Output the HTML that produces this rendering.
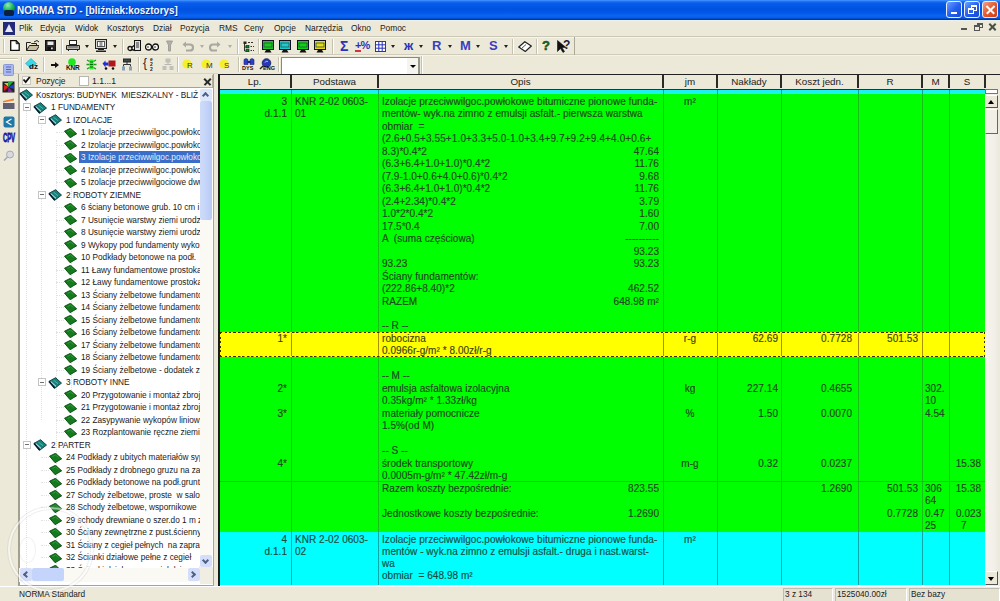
<!DOCTYPE html>
<html><head><meta charset="utf-8">
<style>
*{margin:0;padding:0;box-sizing:border-box}
html,body{width:1000px;height:601px;overflow:hidden;background:#ece9d8;font-family:"Liberation Sans",sans-serif;color:#000;position:relative}
.a{position:absolute}
#title{left:0;top:0;width:1000px;height:20px;background:linear-gradient(#48a0ff 0,#2a78f8 1px,#0a5cea 3px,#0052e0 9px,#0458e8 13px,#0a66f4 16px,#0658e0 18px,#0038a8 19.5px,#0030a0 20px)}
#title .t{left:17px;top:3.5px;font-weight:bold;font-size:11px;transform:scaleX(.9);transform-origin:0 0;color:#f4f8ff;white-space:nowrap;text-shadow:1px 1px 0 #0a2c8a}
.wb{top:1px;width:16px;height:17px;border:1px solid #e8eefc;border-radius:3px;background:linear-gradient(135deg,#6aa0ff,#2660f0 50%,#1848d0)}
#menu{left:0;top:20px;width:1000px;height:17px;background:linear-gradient(#eef2f4 0,#ece9d8 2px);border-bottom:1px solid #cdc9b9}
#menu span{position:absolute;top:2.5px;font-size:9.3px;transform:scaleX(.9);transform-origin:0 0;white-space:nowrap;color:#1a1a1a}
.sep{position:absolute;width:2px;height:16px;border-left:1px solid #c5c2b2;border-right:1px solid #fff}
.tl{position:absolute;font-size:9.6px;white-space:pre;color:#1a1a1a;line-height:12px;transform:scaleX(.86);transform-origin:0 0}
.mb{width:8px;height:8px;border:1px solid #c4c4c4;background:#fff}
.mb:after{content:"";position:absolute;left:1px;top:2.5px;width:4px;height:1px;background:#707070}
.bk{width:13px;height:12px;background:linear-gradient(150deg,#3aa0a8 0,#1a7a80 45%,#0e4850 100%);transform:skewX(-20deg);border-radius:1px}
.lf{width:12px;height:10px;background:#1a7a20;transform:skewX(-35deg);border:1px solid #0a4a10}
.gh{position:absolute;top:75px;height:14px;font-size:9.8px;color:#222;text-align:center;line-height:14px}
.gt{position:absolute;font-size:10px;color:#1c3e1c;-webkit-text-stroke:.15px #2a5a2a;white-space:pre;line-height:12px;letter-spacing:0.05px}
.gy{color:#3a3a08}
.gc{color:#104848}
.vl{position:absolute;width:1px}
#status span{position:absolute;top:589px;font-size:9.2px;color:#222;white-space:nowrap;transform:scaleX(.9);transform-origin:0 0}
</style></head><body>
<div id="title" class="a">
  <div class="a" style="left:3px;top:2px;width:12px;height:9px;border-radius:6px 6px 3px 3px;background:radial-gradient(circle at 40% 35%,#8ff0b0,#18b050 60%,#0c7a38)"></div>
  <div class="a" style="left:4px;top:10px;width:10px;height:6px;background:#0b2040;border-radius:2px"></div>
  <div class="a t">NORMA STD - [bliźniak:kosztorys]</div>
  <div class="a wb" style="left:946px"><div class="a" style="left:4px;top:10px;width:6px;height:2px;background:#fff"></div></div>
  <div class="a wb" style="left:964px"><div class="a" style="left:6px;top:3px;width:6px;height:6px;border:1px solid #fff;border-top-width:2px"></div><div class="a" style="left:3px;top:6px;width:6px;height:6px;border:1px solid #fff;border-top-width:2px;background:#2a64f0"></div></div>
  <div class="a wb" style="left:982px;background:linear-gradient(135deg,#f5a080,#e35a30 50%,#c8401c)"><div class="a" style="left:2px;top:7px;width:11px;height:1.5px;background:#fff;transform:rotate(45deg)"></div><div class="a" style="left:2px;top:7px;width:11px;height:1.5px;background:#fff;transform:rotate(-45deg)"></div></div>
</div>
<div id="menu" class="a">
<div class="a" style="left:3px;top:2px;width:12px;height:13px;background:#232a78"><div class="a" style="left:2px;top:2px;width:0;height:0;border-left:4px solid transparent;border-right:4px solid transparent;border-bottom:8px solid #e8e8f8"></div></div>
<span style="left:19px">Plik</span>
<span style="left:40px">Edycja</span>
<span style="left:75px">Widok</span>
<span style="left:107px">Kosztorys</span>
<span style="left:153px">Dział</span>
<span style="left:180px">Pozycja</span>
<span style="left:219px">RMS</span>
<span style="left:244px">Ceny</span>
<span style="left:274px">Opcje</span>
<span style="left:305px">Narzędzia</span>
<span style="left:351px">Okno</span>
<span style="left:380px">Pomoc</span>
<div class="a" style="left:961px;top:8px;width:6px;height:2px;background:#555"></div>
<div class="a" style="left:977px;top:3px;width:6px;height:5px;border:1px solid #555;border-top-width:2px"></div><div class="a" style="left:974px;top:5px;width:6px;height:6px;border:1px solid #555;border-top-width:2px;background:#ece9d8"></div>
<div class="a" style="left:988px;top:6px;width:9px;height:2px;background:#4a5048;transform:rotate(45deg)"></div><div class="a" style="left:988px;top:6px;width:9px;height:2px;background:#4a5048;transform:rotate(-45deg)"></div>
</div>
<div class="a" style="left:0;top:37px;width:1000px;height:1px;background:#f6f4ec"></div>
<div class="a" style="left:0;top:54px;width:1000px;height:1px;background:#d0ccbc"></div>
<div class="a" style="left:0;top:55px;width:1000px;height:1px;background:#f4f2ea"></div>
<div class="a" style="left:0;top:73px;width:218px;height:1px;background:#d8d4c4"></div>
<div class="a" style="left:3px;top:39px;width:2px;height:14px;border-left:1px solid #c8c4b4;border-right:1px solid #fff"></div>
<div class="a" style="left:21px;top:57px;width:2px;height:14px;border-left:1px solid #c8c4b4;border-right:1px solid #fff"></div>
<svg class="a" style="left:10px;top:40px" width="10" height="11" viewBox="0 0 10 11"><path d="M.7 .7h5.5l3 3v6.6h-8.5z" fill="#fff" stroke="#111" stroke-width="1.3"/><path d="M6.2 .7v3h3" fill="none" stroke="#111"/></svg>
<svg class="a" style="left:26px;top:40px" width="13" height="11" viewBox="0 0 13 11"><path d="M.5 2.5h4l1 1h5v2" fill="#e8e0c0" stroke="#222"/><path d="M.5 10.5v-8M.5 10.5h10l3-5h-10z" fill="#c8c0a0" stroke="#222"/><path d="M8 2l3-1.5 2 1.5" fill="none" stroke="#222"/></svg>
<svg class="a" style="left:45px;top:40px" width="11" height="11" viewBox="0 0 11 11"><rect x=".5" y=".5" width="10" height="10" fill="#2a2a2a" stroke="#111"/><rect x="2.5" y="1.5" width="6" height="3.5" fill="#e8e8e8"/><rect x="2.5" y="7" width="6" height="3.5" fill="#111"/><rect x="6" y="7.5" width="1.8" height="1.8" fill="#ddd"/></svg>
<div class="a" style="left:61px;top:39px;width:2px;height:15px;border-left:1px solid #c5c2b2;border-right:1px solid #fff"></div>
<svg class="a" style="left:66px;top:40px" width="14" height="11" viewBox="0 0 14 11"><rect x="3.5" y=".5" width="7" height="4" fill="#fff" stroke="#222"/><path d="M.5 5.5h13v4h-13z" fill="#b8b8b0" stroke="#222"/><rect x="2.5" y="9.5" width="9" height="2" fill="#eee" stroke="#222"/><line x1="2" y1="7" x2="12" y2="7" stroke="#555"/></svg>
<div class="a" style="left:85px;top:45px;width:0;height:0;border-left:2.5px solid transparent;border-right:2.5px solid transparent;border-top:3px solid #222"></div>
<svg class="a" style="left:95px;top:39px" width="12" height="13" viewBox="0 0 12 13"><rect x=".5" y=".5" width="11" height="9" fill="#d8d8d0" stroke="#222"/><rect x="2.5" y="2.5" width="7" height="5" fill="#fff" stroke="#555"/><rect x="4.5" y="3" width="3" height="4" fill="#999"/><rect x="3" y="10" width="6" height="1" fill="#222"/><rect x="1" y="11.5" width="10" height="1.5" fill="#222"/></svg>
<div class="a" style="left:113px;top:45px;width:0;height:0;border-left:2.5px solid transparent;border-right:2.5px solid transparent;border-top:3px solid #222"></div>
<div class="a" style="left:122px;top:39px;width:2px;height:15px;border-left:1px solid #c5c2b2;border-right:1px solid #fff"></div>
<svg class="a" style="left:127px;top:40px" width="14" height="12" viewBox="0 0 14 12"><circle cx="3" cy="8.5" r="2" fill="none" stroke="#111" stroke-width="1.3"/><path d="M4.5 7.5l4-3M4.5 9.5l4 1" stroke="#111" stroke-width="1.3"/><rect x="7.5" y=".5" width="6" height="10" fill="#e0e0e0" stroke="#111"/><line x1="9" y1="3" x2="12" y2="3" stroke="#333"/><line x1="9" y1="5" x2="12" y2="5" stroke="#333"/><line x1="9" y1="7" x2="12" y2="7" stroke="#333"/></svg>
<svg class="a" style="left:145px;top:42px" width="14" height="9" viewBox="0 0 14 9"><circle cx="3.5" cy="5" r="3" fill="#f8f8f0" stroke="#111" stroke-width="1.3"/><circle cx="10.5" cy="5" r="3" fill="#f8f8f0" stroke="#111" stroke-width="1.3"/><path d="M2 5h2M9 5h2" stroke="#333"/></svg>
<svg class="a" style="left:166px;top:40px" width="7" height="12" viewBox="0 0 7 12"><path d="M.5 1h6l-2 4v6h-2v-6z" fill="#b0b0a8" stroke="#a0a098"/></svg>
<svg class="a" style="left:182px;top:41px" width="12" height="11" viewBox="0 0 12 11"><path d="M3 3.5h5a3 3 0 0 1 0 6h-4" fill="none" stroke="#a8a8a0" stroke-width="2.2"/><path d="M.5 3.5l3.5-3v6z" fill="#a8a8a0"/></svg>
<div class="a" style="left:200px;top:45px;width:0;height:0;border-left:2.5px solid transparent;border-right:2.5px solid transparent;border-top:3px solid #b0aea0"></div>
<svg class="a" style="left:209px;top:41px" width="12" height="11" viewBox="0 0 12 11"><path d="M9 3.5h-5a3 3 0 0 0 0 6h4" fill="none" stroke="#a8a8a0" stroke-width="2.2"/><path d="M11.5 3.5l-3.5-3v6z" fill="#a8a8a0"/></svg>
<div class="a" style="left:228px;top:45px;width:0;height:0;border-left:2.5px solid transparent;border-right:2.5px solid transparent;border-top:3px solid #b0aea0"></div>
<div class="a" style="left:237px;top:39px;width:2px;height:15px;border-left:1px solid #c5c2b2;border-right:1px solid #fff"></div>
<svg class="a" style="left:243px;top:41px" width="12" height="11" viewBox="0 0 12 11"><rect x=".5" y=".5" width="3" height="2.5" fill="#222"/><rect x="3" y="4.5" width="3" height="2.5" fill="#0a8a2a" stroke="#111" stroke-width=".6"/><rect x="3" y="8.5" width="3" height="2.5" fill="#0a8a2a" stroke="#111" stroke-width=".6"/><path d="M1.5 3v7h1.5M1.5 6h1.5" stroke="#333" fill="none"/><path d="M5 1.5h2M8 1.5h2M7.5 5.5h1.5M7.5 9.5h1.5M10 5.5h1M10 9.5h1" stroke="#333"/></svg>
<div class="a" style="left:258px;top:39px;width:2px;height:15px;border-left:1px solid #c5c2b2;border-right:1px solid #fff"></div>
<svg class="a" style="left:262px;top:40px" width="12" height="13" viewBox="0 0 12 13"><rect x=".5" y=".5" width="11" height="9" fill="#1ec81e" stroke="#112"/><rect x="2" y="3" width="8" height="4" fill="none" stroke="#254" stroke-width=".8"/><path d="M4 10h4l1.5 2.5h-7z" fill="#111"/></svg>
<svg class="a" style="left:279px;top:40px" width="12" height="13" viewBox="0 0 12 13"><rect x=".5" y=".5" width="11" height="9" fill="#22c8d0" stroke="#112"/><rect x="2" y="3" width="8" height="4" fill="none" stroke="#254" stroke-width=".8"/><path d="M4 10h4l1.5 2.5h-7z" fill="#111"/></svg>
<svg class="a" style="left:297px;top:40px" width="12" height="13" viewBox="0 0 12 13"><rect x=".5" y=".5" width="11" height="9" fill="#12d012" stroke="#112"/><rect x="2" y="3" width="8" height="4" fill="none" stroke="#254" stroke-width=".8"/><path d="M4 10h4l1.5 2.5h-7z" fill="#111"/></svg>
<svg class="a" style="left:314px;top:40px" width="12" height="13" viewBox="0 0 12 13"><rect x=".5" y=".5" width="11" height="9" fill="#e8d820" stroke="#112"/><rect x="2" y="3" width="8" height="4" fill="none" stroke="#254" stroke-width=".8"/><path d="M4 10h4l1.5 2.5h-7z" fill="#111"/></svg>
<div class="a" style="left:332px;top:39px;width:2px;height:15px;border-left:1px solid #c5c2b2;border-right:1px solid #fff"></div>
<div class="a" style="left:340px;top:38px;font-size:14px;font-weight:bold;color:#2a34b8;line-height:16px">Σ</div>
<div class="a" style="left:355px;top:39px;font-size:11px;font-weight:bold;color:#2a34b8;line-height:12px;letter-spacing:-1px">+%</div>
<div class="a" style="left:355px;top:50px;width:6px;height:2px;background:#d83040"></div>
<svg class="a" style="left:375px;top:41px" width="11" height="11" viewBox="0 0 11 11"><rect x=".5" y=".5" width="10" height="10" fill="#fff" stroke="#2a34b8"/><path d="M.5 3.8h10M.5 7.2h10M3.8 .5v10M7.2 .5v10" stroke="#2a34b8"/></svg>
<div class="a" style="left:391px;top:45px;width:0;height:0;border-left:2.5px solid transparent;border-right:2.5px solid transparent;border-top:3px solid #222"></div>
<div class="a" style="left:404px;top:39px;font-size:13px;font-weight:bold;color:#2a34b8;line-height:14px">ж</div>
<div class="a" style="left:419px;top:45px;width:0;height:0;border-left:2.5px solid transparent;border-right:2.5px solid transparent;border-top:3px solid #222"></div>
<div class="a" style="left:432px;top:39px;font-size:13px;font-weight:bold;color:#3840c0;line-height:14px">R</div>
<div class="a" style="left:448px;top:45px;width:0;height:0;border-left:2.5px solid transparent;border-right:2.5px solid transparent;border-top:3px solid #222"></div>
<div class="a" style="left:460px;top:39px;font-size:13px;font-weight:bold;color:#3840c0;line-height:14px">M</div>
<div class="a" style="left:476px;top:45px;width:0;height:0;border-left:2.5px solid transparent;border-right:2.5px solid transparent;border-top:3px solid #222"></div>
<div class="a" style="left:489px;top:39px;font-size:13px;font-weight:bold;color:#3840c0;line-height:14px">S</div>
<div class="a" style="left:504px;top:45px;width:0;height:0;border-left:2.5px solid transparent;border-right:2.5px solid transparent;border-top:3px solid #222"></div>
<div class="a" style="left:512px;top:39px;width:2px;height:15px;border-left:1px solid #c5c2b2;border-right:1px solid #fff"></div>
<svg class="a" style="left:518px;top:41px" width="14" height="11" viewBox="0 0 14 11"><path d="M.8 6l6-5.3 6.5 4.3-6 5.5z" fill="#fff" stroke="#222" stroke-width="1.2"/><path d="M3 8l5-4.5" stroke="#555"/></svg>
<div class="a" style="left:536px;top:39px;width:2px;height:15px;border-left:1px solid #c5c2b2;border-right:1px solid #fff"></div>
<div class="a" style="left:542px;top:38px;font-size:13px;font-weight:bold;color:#1a6a2a;line-height:15px;-webkit-text-stroke:.5px #0a4a1a">?</div>
<svg class="a" style="left:557px;top:40px" width="16" height="13" viewBox="0 0 16 13"><path d="M.5 .5v11l3-3 2.5 4 1.5-1-2.5-4h4z" fill="#111" stroke="#111" stroke-width=".6"/></svg>
<div class="a" style="left:563px;top:38px;font-size:12px;font-weight:bold;color:#1a1a40;line-height:14px">?</div>
<div class="a" style="left:574px;top:37px;width:1px;height:18px;background:#aca898"></div>
<div class="a" style="left:43px;top:57px;width:2px;height:15px;border-left:1px solid #c5c2b2;border-right:1px solid #fff"></div>
<svg class="a" style="left:25px;top:58px" width="13" height="13" viewBox="0 0 13 13"><path d="M6 .5l5.5 5-5.5 5-5.5-5z" fill="#38d8e8" stroke="#1aa8c8" stroke-width=".6"/></svg>
<div class="a" style="left:29px;top:62px;font-size:8px;font-weight:bold;color:#111;line-height:9px">dz</div>
<svg class="a" style="left:51px;top:62px" width="8" height="6" viewBox="0 0 8 6"><path d="M0 2h4v-2l4 3-4 3v-2h-4z" fill="#111"/></svg>
<svg class="a" style="left:66px;top:58px" width="13" height="13" viewBox="0 0 13 13"><circle cx="6" cy="4" r="3.8" fill="#20e820"/></svg>
<div class="a" style="left:66px;top:64px;font-size:6.5px;font-weight:bold;color:#0a1a0a;line-height:7px;letter-spacing:-.2px">KNR</div>
<svg class="a" style="left:86px;top:58px" width="11" height="13" viewBox="0 0 11 13"><path d="M3.5 1.5h4v10h-4z" fill="#38e838"/><path d="M1 2l2.5 1.5M10 2l-2.5 1.5M.5 6.5h3M10.5 6.5h-3M1 11l2.5-1.5M10 11l-2.5-1.5" stroke="#10a010" stroke-width="1.3"/><path d="M4 4h3M4 6.5h3M4 9h3" stroke="#0a6a0a"/></svg>
<svg class="a" style="left:102px;top:59px" width="14" height="11" viewBox="0 0 14 11"><rect x="6.5" y="1.5" width="7" height="6" fill="#b01818"/><path d="M.5 4.5l3-3v2h3v3h-3v2z" fill="#2030d0"/><circle cx="4" cy="9.5" r="1.3" fill="#111"/><circle cx="11" cy="9.5" r="1.3" fill="#111"/></svg>
<svg class="a" style="left:121px;top:58px" width="12" height="13" viewBox="0 0 12 13"><rect x="2.5" y="1" width="7" height="3" fill="#3a4a48" stroke="#222"/><path d="M6 4v2.5M2.5 6.5h7M2.5 6.5v2M9.5 6.5v2" stroke="#333"/><rect x="1" y="8.5" width="3" height="4" fill="#8aa0b8"/><rect x="8" y="8.5" width="3" height="4" fill="#8aa0b8"/></svg>
<div class="a" style="left:138px;top:57px;width:2px;height:15px;border-left:1px solid #c5c2b2;border-right:1px solid #fff"></div>
<div class="a" style="left:143px;top:57px;font-size:12px;color:#222;line-height:13px">{</div>
<div class="a" style="left:150px;top:57px;font-size:5px;font-weight:bold;color:#222;line-height:5px">e<br>2<br>2</div>
<svg class="a" style="left:162px;top:58px" width="12" height="13" viewBox="0 0 12 13"><rect x="3.5" y=".5" width="5" height="4" fill="#c0c0b8"/><path d="M6 4v2.5M2.5 6.5h7" stroke="#b8b8b0"/><rect x=".5" y="8" width="4" height="4" fill="#c0c0b8"/><rect x="7.5" y="8" width="4" height="4" fill="#c0c0b8"/></svg>
<div class="a" style="left:177px;top:57px;width:2px;height:15px;border-left:1px solid #c5c2b2;border-right:1px solid #fff"></div>
<svg class="a" style="left:182px;top:59px" width="10" height="10" viewBox="0 0 10 10"><circle cx="5" cy="5" r="4.6" fill="#f4f02a"/></svg>
<div class="a" style="left:187px;top:61px;font-size:8px;color:#333;line-height:9px">R</div>
<svg class="a" style="left:201px;top:59px" width="10" height="10" viewBox="0 0 10 10"><circle cx="5" cy="5" r="4.6" fill="#f4f02a"/></svg>
<div class="a" style="left:206px;top:61px;font-size:8px;color:#333;line-height:9px">M</div>
<svg class="a" style="left:219px;top:59px" width="10" height="10" viewBox="0 0 10 10"><circle cx="5" cy="5" r="4.6" fill="#f4f02a"/></svg>
<div class="a" style="left:224px;top:61px;font-size:8px;color:#333;line-height:9px">S</div>
<div class="a" style="left:238px;top:57px;width:2px;height:15px;border-left:1px solid #c5c2b2;border-right:1px solid #fff"></div>
<svg class="a" style="left:243px;top:58px" width="12" height="12" viewBox="0 0 12 12"><path d="M1 1.5l2 -1 2 1v5h-4zM7 1.5l2-1 2 1v5h-4z" fill="#2a40c8" stroke="#1a2080" stroke-width=".6"/><rect x="4.5" y="3" width="3" height="2" fill="#1a2080"/></svg>
<div class="a" style="left:242px;top:65px;font-size:5.5px;font-weight:bold;color:#111;line-height:6px">DYS</div>
<svg class="a" style="left:259px;top:58px" width="13" height="13" viewBox="0 0 13 13"><circle cx="7.5" cy="5" r="4.3" fill="#2838b8" stroke="#101858" stroke-width=".8"/><path d="M6 4.5a2 1.5 0 0 1 3 -1" stroke="#a8c0ff" fill="none"/><path d="M4 8l-3 3" stroke="#222" stroke-width="1.5"/></svg>
<div class="a" style="left:263px;top:65px;font-size:5.5px;font-weight:bold;color:#111;line-height:6px">ENG</div>
<div class="a" style="left:278px;top:57px;width:2px;height:15px;border-left:1px solid #c5c2b2;border-right:1px solid #fff"></div>
<svg class="a" style="left:3px;top:64px" width="11" height="12" viewBox="0 0 11 12"><rect x=".5" y=".5" width="10" height="11" rx="1" fill="#aab8f0" stroke="#8898d8"/><path d="M3 3h5M3 5.5h5M3 8h5" stroke="#5a6ab8"/></svg>
<svg class="a" style="left:2px;top:81px" width="13" height="12" viewBox="0 0 13 12"><rect x=".5" y=".5" width="12" height="11" fill="#222"/><path d="M6.5 6L2 2h4z" fill="#e8c020"/><path d="M6.5 6L6 1h5z" fill="#20b040"/><path d="M6.5 6L12 3v5z" fill="#2040d0"/><path d="M6.5 6L11 11H6z" fill="#8020a0"/><path d="M6.5 6L2 10V4z" fill="#e02020"/></svg>
<svg class="a" style="left:2px;top:98px" width="13" height="12" viewBox="0 0 13 12"><path d="M1 3l11-2.5v2l-11 2z" fill="#f08030"/><rect x="1" y="5" width="11.5" height="6" fill="#606070"/></svg>
<svg class="a" style="left:3px;top:116px" width="12" height="12" viewBox="0 0 12 12"><rect x=".5" y=".5" width="11" height="11" rx="2" fill="#1e78a8"/><path d="M8.5 3l-5 3 5 3" stroke="#fff" fill="none" stroke-width="1.2"/></svg>
<div class="a" style="left:3px;top:131px;font-size:11px;font-weight:bold;color:#1a1aa8;line-height:12px;letter-spacing:-.3px;transform:scale(.55,1.1);transform-origin:0 0;-webkit-text-stroke:.7px #1a1aa8">CPV</div>
<svg class="a" style="left:3px;top:150px" width="12" height="11" viewBox="0 0 12 11"><circle cx="7" cy="4.5" r="3.5" fill="#d8d8e0" stroke="#a8a8b8"/><path d="M4.5 7l-3.5 3.5" stroke="#a8a8b8" stroke-width="1.6"/></svg>
<div class="a" style="left:281px;top:57px;width:139px;height:17px;background:#fff;border:1px solid #8a887c;border-right:2px solid #9a9888;border-bottom:none"></div>
<div class="a" style="left:407px;top:58px;width:11px;height:16px;background:#f6f4ee"></div>
<div class="a" style="left:410px;top:65px;width:0;height:0;border-left:3px solid transparent;border-right:3px solid transparent;border-top:3px solid #000"></div>
<div class="a" style="left:421px;top:56px;width:2px;height:18px;border-left:1px solid #c5c2b2;border-right:1px solid #fff"></div>
<div class="a" style="left:0px;top:58px;width:18px;height:1px;background:#c8c4b4"></div><div class="a" style="left:0px;top:59px;width:18px;height:1px;background:#fff"></div>
<div class="a" style="left:18px;top:74px;width:196px;height:512px;background:#fff;border:1px solid #a8a494;border-left:2px solid #a4a090"></div>
<div class="a" style="left:19px;top:74px;width:194px;height:14px;background:#ece9d8;border-bottom:1px solid #a6a393"></div>
<div class="a" style="left:22px;top:76px;width:9px;height:9px;border:1px solid #c8c8c0;background:#f8f8f4"></div>
<svg class="a" style="left:22px;top:76px" width="9" height="8" viewBox="0 0 9 8"><path d="M1.5 3.5l2.2 2.5 4-5" fill="none" stroke="#111" stroke-width="1.8"/></svg>
<div class="a" style="left:36px;top:75px;font-size:9.6px;color:#222;white-space:nowrap;transform:scaleX(.88);transform-origin:0 0">Pozycje</div>
<div class="a" style="left:79px;top:76px;width:10px;height:10px;border:1px solid #b8b8b0;background:#fff"></div>
<div class="a" style="left:92px;top:75px;font-size:9.6px;color:#222;white-space:nowrap;transform:scaleX(.9);transform-origin:0 0">1.1...1</div>
<div class="a" style="left:200px;top:75px;width:13px;height:13px;border-right:1px solid #b4b0a0;border-bottom:1px solid #b4b0a0"></div>
<div class="a" style="left:203px;top:81px;width:9px;height:1.6px;background:#2a2a2a;transform:rotate(45deg)"></div><div class="a" style="left:203px;top:81px;width:9px;height:1.6px;background:#2a2a2a;transform:rotate(-45deg)"></div>
<div class="a" style="left:19px;top:89px;width:181px;height:479px;overflow:hidden">
<div class="a" style="left:7px;top:11px;width:1px;height:470px;border-left:1px dotted #e2e2e2"></div>
<div class="a" style="left:22px;top:36px;width:1px;height:295px;border-left:1px dotted #e2e2e2"></div>
<div class="a" style="left:37px;top:51px;width:1px;height:430px;border-left:1px dotted #e2e2e2"></div>
<div class="a" style="left:52px;top:41px;width:1px;height:270px;border-left:1px dotted #e2e2e2"></div>
<svg class="a" style="left:0px;top:0.0px" width="14" height="12" viewBox="0 0 14 12"><path d="M1 4.3L7.6 .7l5.9 5.4-7 5.3z" fill="#17807a" stroke="#0a3a40" stroke-width=".9"/><path d="M5.5 3.2l4.5 3.5" stroke="#48b8a8" stroke-width="1"/><path d="M2.8 4.6l5.2 4.8" stroke="#e0f4f4" stroke-width="1"/><path d="M1 4.6l5.6 6.4" stroke="#0a1830" stroke-width="1.5"/></svg>
<div class="tl" style="left:17px;top:-0.5px;color:#1a1a1a">Kosztorys: BUDYNEK  MIESZKALNY - BLIŹ</div>
<div class="a mb" style="left:4px;top:14.0px"></div>
<svg class="a" style="left:14px;top:12.5px" width="14" height="12" viewBox="0 0 14 12"><path d="M1 4.3L7.6 .7l5.9 5.4-7 5.3z" fill="#17807a" stroke="#0a3a40" stroke-width=".9"/><path d="M5.5 3.2l4.5 3.5" stroke="#48b8a8" stroke-width="1"/><path d="M2.8 4.6l5.2 4.8" stroke="#e0f4f4" stroke-width="1"/><path d="M1 4.6l5.6 6.4" stroke="#0a1830" stroke-width="1.5"/></svg>
<div class="tl" style="left:32px;top:12.0px;color:#1a1a1a">1 FUNDAMENTY</div>
<div class="a mb" style="left:19px;top:26.5px"></div>
<svg class="a" style="left:29px;top:25.0px" width="14" height="12" viewBox="0 0 14 12"><path d="M1 4.3L7.6 .7l5.9 5.4-7 5.3z" fill="#17807a" stroke="#0a3a40" stroke-width=".9"/><path d="M5.5 3.2l4.5 3.5" stroke="#48b8a8" stroke-width="1"/><path d="M2.8 4.6l5.2 4.8" stroke="#e0f4f4" stroke-width="1"/><path d="M1 4.6l5.6 6.4" stroke="#0a1830" stroke-width="1.5"/></svg>
<div class="tl" style="left:47px;top:24.5px;color:#1a1a1a">1 IZOLACJE</div>
<div class="a" style="left:37px;top:43px;width:8px;height:1px;border-top:1px dotted #e2e2e2"></div>
<svg class="a" style="left:45px;top:38.5px" width="13" height="10" viewBox="0 0 13 10"><path d="M.5 3.2L6.5 .3l6.2 5.5-6.6 3.9z" fill="#157a1e" stroke="#0a4a10" stroke-width=".9"/><path d="M3.5 3.5l3-1.5 3 2.5" fill="none" stroke="#2aa83a" stroke-width=".8"/></svg>
<div class="tl" style="left:62px;top:37.0px;color:#1a1a1a">1 Izolacje przeciwwilgoc.powłokowe</div>
<div class="a" style="left:37px;top:56px;width:8px;height:1px;border-top:1px dotted #e2e2e2"></div>
<svg class="a" style="left:45px;top:51.0px" width="13" height="10" viewBox="0 0 13 10"><path d="M.5 3.2L6.5 .3l6.2 5.5-6.6 3.9z" fill="#157a1e" stroke="#0a4a10" stroke-width=".9"/><path d="M3.5 3.5l3-1.5 3 2.5" fill="none" stroke="#2aa83a" stroke-width=".8"/></svg>
<div class="tl" style="left:62px;top:49.5px;color:#1a1a1a">2 Izolacje przeciwwilgoc.powłokowe</div>
<div class="a" style="left:37px;top:68px;width:8px;height:1px;border-top:1px dotted #e2e2e2"></div>
<svg class="a" style="left:45px;top:63.5px" width="13" height="10" viewBox="0 0 13 10"><path d="M.5 3.2L6.5 .3l6.2 5.5-6.6 3.9z" fill="#157a1e" stroke="#0a4a10" stroke-width=".9"/><path d="M3.5 3.5l3-1.5 3 2.5" fill="none" stroke="#2aa83a" stroke-width=".8"/></svg>
<div class="a" style="left:60px;top:62.0px;width:126px;height:12px;background:#3a6ec8"></div>
<div class="tl" style="left:62px;top:62.0px;color:#e8eef8">3 Izolacje przeciwwilgoc.powłokowe</div>
<div class="a" style="left:37px;top:81px;width:8px;height:1px;border-top:1px dotted #e2e2e2"></div>
<svg class="a" style="left:45px;top:76.0px" width="13" height="10" viewBox="0 0 13 10"><path d="M.5 3.2L6.5 .3l6.2 5.5-6.6 3.9z" fill="#157a1e" stroke="#0a4a10" stroke-width=".9"/><path d="M3.5 3.5l3-1.5 3 2.5" fill="none" stroke="#2aa83a" stroke-width=".8"/></svg>
<div class="tl" style="left:62px;top:74.5px;color:#1a1a1a">4 Izolacje przeciwwilgoc.powłokowe</div>
<div class="a" style="left:37px;top:93px;width:8px;height:1px;border-top:1px dotted #e2e2e2"></div>
<svg class="a" style="left:45px;top:88.5px" width="13" height="10" viewBox="0 0 13 10"><path d="M.5 3.2L6.5 .3l6.2 5.5-6.6 3.9z" fill="#157a1e" stroke="#0a4a10" stroke-width=".9"/><path d="M3.5 3.5l3-1.5 3 2.5" fill="none" stroke="#2aa83a" stroke-width=".8"/></svg>
<div class="tl" style="left:62px;top:87.0px;color:#1a1a1a">5 Izolacje przeciwwilgociowe dwukrotne</div>
<div class="a mb" style="left:19px;top:101.5px"></div>
<svg class="a" style="left:29px;top:100.0px" width="14" height="12" viewBox="0 0 14 12"><path d="M1 4.3L7.6 .7l5.9 5.4-7 5.3z" fill="#17807a" stroke="#0a3a40" stroke-width=".9"/><path d="M5.5 3.2l4.5 3.5" stroke="#48b8a8" stroke-width="1"/><path d="M2.8 4.6l5.2 4.8" stroke="#e0f4f4" stroke-width="1"/><path d="M1 4.6l5.6 6.4" stroke="#0a1830" stroke-width="1.5"/></svg>
<div class="tl" style="left:47px;top:99.5px;color:#1a1a1a">2 ROBOTY ZIEMNE</div>
<div class="a" style="left:37px;top:118px;width:8px;height:1px;border-top:1px dotted #e2e2e2"></div>
<svg class="a" style="left:45px;top:113.5px" width="13" height="10" viewBox="0 0 13 10"><path d="M.5 3.2L6.5 .3l6.2 5.5-6.6 3.9z" fill="#157a1e" stroke="#0a4a10" stroke-width=".9"/><path d="M3.5 3.5l3-1.5 3 2.5" fill="none" stroke="#2aa83a" stroke-width=".8"/></svg>
<div class="tl" style="left:62px;top:112.0px;color:#1a1a1a">6 ściany betonowe grub. 10 cm i</div>
<div class="a" style="left:37px;top:131px;width:8px;height:1px;border-top:1px dotted #e2e2e2"></div>
<svg class="a" style="left:45px;top:126.0px" width="13" height="10" viewBox="0 0 13 10"><path d="M.5 3.2L6.5 .3l6.2 5.5-6.6 3.9z" fill="#157a1e" stroke="#0a4a10" stroke-width=".9"/><path d="M3.5 3.5l3-1.5 3 2.5" fill="none" stroke="#2aa83a" stroke-width=".8"/></svg>
<div class="tl" style="left:62px;top:124.5px;color:#1a1a1a">7 Usunięcie warstwy ziemi urodzajnej</div>
<div class="a" style="left:37px;top:143px;width:8px;height:1px;border-top:1px dotted #e2e2e2"></div>
<svg class="a" style="left:45px;top:138.5px" width="13" height="10" viewBox="0 0 13 10"><path d="M.5 3.2L6.5 .3l6.2 5.5-6.6 3.9z" fill="#157a1e" stroke="#0a4a10" stroke-width=".9"/><path d="M3.5 3.5l3-1.5 3 2.5" fill="none" stroke="#2aa83a" stroke-width=".8"/></svg>
<div class="tl" style="left:62px;top:137.0px;color:#1a1a1a">8 Usunięcie warstwy ziemi urodzajnej</div>
<div class="a" style="left:37px;top:156px;width:8px;height:1px;border-top:1px dotted #e2e2e2"></div>
<svg class="a" style="left:45px;top:151.0px" width="13" height="10" viewBox="0 0 13 10"><path d="M.5 3.2L6.5 .3l6.2 5.5-6.6 3.9z" fill="#157a1e" stroke="#0a4a10" stroke-width=".9"/><path d="M3.5 3.5l3-1.5 3 2.5" fill="none" stroke="#2aa83a" stroke-width=".8"/></svg>
<div class="tl" style="left:62px;top:149.5px;color:#1a1a1a">9 Wykopy pod fundamenty wykonywane</div>
<div class="a" style="left:37px;top:168px;width:8px;height:1px;border-top:1px dotted #e2e2e2"></div>
<svg class="a" style="left:45px;top:163.5px" width="13" height="10" viewBox="0 0 13 10"><path d="M.5 3.2L6.5 .3l6.2 5.5-6.6 3.9z" fill="#157a1e" stroke="#0a4a10" stroke-width=".9"/><path d="M3.5 3.5l3-1.5 3 2.5" fill="none" stroke="#2aa83a" stroke-width=".8"/></svg>
<div class="tl" style="left:62px;top:162.0px;color:#1a1a1a">10 Podkłady betonowe na podł.</div>
<div class="a" style="left:37px;top:181px;width:8px;height:1px;border-top:1px dotted #e2e2e2"></div>
<svg class="a" style="left:45px;top:176.0px" width="13" height="10" viewBox="0 0 13 10"><path d="M.5 3.2L6.5 .3l6.2 5.5-6.6 3.9z" fill="#157a1e" stroke="#0a4a10" stroke-width=".9"/><path d="M3.5 3.5l3-1.5 3 2.5" fill="none" stroke="#2aa83a" stroke-width=".8"/></svg>
<div class="tl" style="left:62px;top:174.5px;color:#1a1a1a">11 Ławy fundamentowe prostokątne</div>
<div class="a" style="left:37px;top:193px;width:8px;height:1px;border-top:1px dotted #e2e2e2"></div>
<svg class="a" style="left:45px;top:188.5px" width="13" height="10" viewBox="0 0 13 10"><path d="M.5 3.2L6.5 .3l6.2 5.5-6.6 3.9z" fill="#157a1e" stroke="#0a4a10" stroke-width=".9"/><path d="M3.5 3.5l3-1.5 3 2.5" fill="none" stroke="#2aa83a" stroke-width=".8"/></svg>
<div class="tl" style="left:62px;top:187.0px;color:#1a1a1a">12 Ławy fundamentowe prostokątne</div>
<div class="a" style="left:37px;top:206px;width:8px;height:1px;border-top:1px dotted #e2e2e2"></div>
<svg class="a" style="left:45px;top:201.0px" width="13" height="10" viewBox="0 0 13 10"><path d="M.5 3.2L6.5 .3l6.2 5.5-6.6 3.9z" fill="#157a1e" stroke="#0a4a10" stroke-width=".9"/><path d="M3.5 3.5l3-1.5 3 2.5" fill="none" stroke="#2aa83a" stroke-width=".8"/></svg>
<div class="tl" style="left:62px;top:199.5px;color:#1a1a1a">13 Ściany żelbetowe fundamentowe</div>
<div class="a" style="left:37px;top:218px;width:8px;height:1px;border-top:1px dotted #e2e2e2"></div>
<svg class="a" style="left:45px;top:213.5px" width="13" height="10" viewBox="0 0 13 10"><path d="M.5 3.2L6.5 .3l6.2 5.5-6.6 3.9z" fill="#157a1e" stroke="#0a4a10" stroke-width=".9"/><path d="M3.5 3.5l3-1.5 3 2.5" fill="none" stroke="#2aa83a" stroke-width=".8"/></svg>
<div class="tl" style="left:62px;top:212.0px;color:#1a1a1a">14 Ściany żelbetowe fundamentowe</div>
<div class="a" style="left:37px;top:231px;width:8px;height:1px;border-top:1px dotted #e2e2e2"></div>
<svg class="a" style="left:45px;top:226.0px" width="13" height="10" viewBox="0 0 13 10"><path d="M.5 3.2L6.5 .3l6.2 5.5-6.6 3.9z" fill="#157a1e" stroke="#0a4a10" stroke-width=".9"/><path d="M3.5 3.5l3-1.5 3 2.5" fill="none" stroke="#2aa83a" stroke-width=".8"/></svg>
<div class="tl" style="left:62px;top:224.5px;color:#1a1a1a">15 Ściany żelbetowe fundamentowe</div>
<div class="a" style="left:37px;top:243px;width:8px;height:1px;border-top:1px dotted #e2e2e2"></div>
<svg class="a" style="left:45px;top:238.5px" width="13" height="10" viewBox="0 0 13 10"><path d="M.5 3.2L6.5 .3l6.2 5.5-6.6 3.9z" fill="#157a1e" stroke="#0a4a10" stroke-width=".9"/><path d="M3.5 3.5l3-1.5 3 2.5" fill="none" stroke="#2aa83a" stroke-width=".8"/></svg>
<div class="tl" style="left:62px;top:237.0px;color:#1a1a1a">16 Ściany żelbetowe fundamentowe</div>
<div class="a" style="left:37px;top:256px;width:8px;height:1px;border-top:1px dotted #e2e2e2"></div>
<svg class="a" style="left:45px;top:251.0px" width="13" height="10" viewBox="0 0 13 10"><path d="M.5 3.2L6.5 .3l6.2 5.5-6.6 3.9z" fill="#157a1e" stroke="#0a4a10" stroke-width=".9"/><path d="M3.5 3.5l3-1.5 3 2.5" fill="none" stroke="#2aa83a" stroke-width=".8"/></svg>
<div class="tl" style="left:62px;top:249.5px;color:#1a1a1a">17 Ściany żelbetowe fundamentowe</div>
<div class="a" style="left:37px;top:268px;width:8px;height:1px;border-top:1px dotted #e2e2e2"></div>
<svg class="a" style="left:45px;top:263.5px" width="13" height="10" viewBox="0 0 13 10"><path d="M.5 3.2L6.5 .3l6.2 5.5-6.6 3.9z" fill="#157a1e" stroke="#0a4a10" stroke-width=".9"/><path d="M3.5 3.5l3-1.5 3 2.5" fill="none" stroke="#2aa83a" stroke-width=".8"/></svg>
<div class="tl" style="left:62px;top:262.0px;color:#1a1a1a">18 Ściany żelbetowe fundamentowe</div>
<div class="a" style="left:37px;top:281px;width:8px;height:1px;border-top:1px dotted #e2e2e2"></div>
<svg class="a" style="left:45px;top:276.0px" width="13" height="10" viewBox="0 0 13 10"><path d="M.5 3.2L6.5 .3l6.2 5.5-6.6 3.9z" fill="#157a1e" stroke="#0a4a10" stroke-width=".9"/><path d="M3.5 3.5l3-1.5 3 2.5" fill="none" stroke="#2aa83a" stroke-width=".8"/></svg>
<div class="tl" style="left:62px;top:274.5px;color:#1a1a1a">19 Ściany żelbetowe - dodatek za</div>
<div class="a mb" style="left:19px;top:289.0px"></div>
<svg class="a" style="left:29px;top:287.5px" width="14" height="12" viewBox="0 0 14 12"><path d="M1 4.3L7.6 .7l5.9 5.4-7 5.3z" fill="#17807a" stroke="#0a3a40" stroke-width=".9"/><path d="M5.5 3.2l4.5 3.5" stroke="#48b8a8" stroke-width="1"/><path d="M2.8 4.6l5.2 4.8" stroke="#e0f4f4" stroke-width="1"/><path d="M1 4.6l5.6 6.4" stroke="#0a1830" stroke-width="1.5"/></svg>
<div class="tl" style="left:47px;top:287.0px;color:#1a1a1a">3 ROBOTY INNE</div>
<div class="a" style="left:37px;top:306px;width:8px;height:1px;border-top:1px dotted #e2e2e2"></div>
<svg class="a" style="left:45px;top:301.0px" width="13" height="10" viewBox="0 0 13 10"><path d="M.5 3.2L6.5 .3l6.2 5.5-6.6 3.9z" fill="#157a1e" stroke="#0a4a10" stroke-width=".9"/><path d="M3.5 3.5l3-1.5 3 2.5" fill="none" stroke="#2aa83a" stroke-width=".8"/></svg>
<div class="tl" style="left:62px;top:299.5px;color:#1a1a1a">20 Przygotowanie i montaż zbrojenia</div>
<div class="a" style="left:37px;top:318px;width:8px;height:1px;border-top:1px dotted #e2e2e2"></div>
<svg class="a" style="left:45px;top:313.5px" width="13" height="10" viewBox="0 0 13 10"><path d="M.5 3.2L6.5 .3l6.2 5.5-6.6 3.9z" fill="#157a1e" stroke="#0a4a10" stroke-width=".9"/><path d="M3.5 3.5l3-1.5 3 2.5" fill="none" stroke="#2aa83a" stroke-width=".8"/></svg>
<div class="tl" style="left:62px;top:312.0px;color:#1a1a1a">21 Przygotowanie i montaż zbrojenia</div>
<div class="a" style="left:37px;top:331px;width:8px;height:1px;border-top:1px dotted #e2e2e2"></div>
<svg class="a" style="left:45px;top:326.0px" width="13" height="10" viewBox="0 0 13 10"><path d="M.5 3.2L6.5 .3l6.2 5.5-6.6 3.9z" fill="#157a1e" stroke="#0a4a10" stroke-width=".9"/><path d="M3.5 3.5l3-1.5 3 2.5" fill="none" stroke="#2aa83a" stroke-width=".8"/></svg>
<div class="tl" style="left:62px;top:324.5px;color:#1a1a1a">22 Zasypywanie wykopów liniowych</div>
<div class="a" style="left:37px;top:343px;width:8px;height:1px;border-top:1px dotted #e2e2e2"></div>
<svg class="a" style="left:45px;top:338.5px" width="13" height="10" viewBox="0 0 13 10"><path d="M.5 3.2L6.5 .3l6.2 5.5-6.6 3.9z" fill="#157a1e" stroke="#0a4a10" stroke-width=".9"/><path d="M3.5 3.5l3-1.5 3 2.5" fill="none" stroke="#2aa83a" stroke-width=".8"/></svg>
<div class="tl" style="left:62px;top:337.0px;color:#1a1a1a">23 Rozplantowanie ręczne ziemi</div>
<div class="a mb" style="left:4px;top:351.5px"></div>
<svg class="a" style="left:14px;top:350.0px" width="14" height="12" viewBox="0 0 14 12"><path d="M1 4.3L7.6 .7l5.9 5.4-7 5.3z" fill="#17807a" stroke="#0a3a40" stroke-width=".9"/><path d="M5.5 3.2l4.5 3.5" stroke="#48b8a8" stroke-width="1"/><path d="M2.8 4.6l5.2 4.8" stroke="#e0f4f4" stroke-width="1"/><path d="M1 4.6l5.6 6.4" stroke="#0a1830" stroke-width="1.5"/></svg>
<div class="tl" style="left:32px;top:349.5px;color:#1a1a1a">2 PARTER</div>
<div class="a" style="left:22px;top:368px;width:8px;height:1px;border-top:1px dotted #e2e2e2"></div>
<svg class="a" style="left:30px;top:363.5px" width="13" height="10" viewBox="0 0 13 10"><path d="M.5 3.2L6.5 .3l6.2 5.5-6.6 3.9z" fill="#157a1e" stroke="#0a4a10" stroke-width=".9"/><path d="M3.5 3.5l3-1.5 3 2.5" fill="none" stroke="#2aa83a" stroke-width=".8"/></svg>
<div class="tl" style="left:47px;top:362.0px;color:#1a1a1a">24 Podkłady z ubitych materiałów sypkich</div>
<div class="a" style="left:22px;top:381px;width:8px;height:1px;border-top:1px dotted #e2e2e2"></div>
<svg class="a" style="left:30px;top:376.0px" width="13" height="10" viewBox="0 0 13 10"><path d="M.5 3.2L6.5 .3l6.2 5.5-6.6 3.9z" fill="#157a1e" stroke="#0a4a10" stroke-width=".9"/><path d="M3.5 3.5l3-1.5 3 2.5" fill="none" stroke="#2aa83a" stroke-width=".8"/></svg>
<div class="tl" style="left:47px;top:374.5px;color:#1a1a1a">25 Podkłady z drobnego gruzu na zaprawie</div>
<div class="a" style="left:22px;top:393px;width:8px;height:1px;border-top:1px dotted #e2e2e2"></div>
<svg class="a" style="left:30px;top:388.5px" width="13" height="10" viewBox="0 0 13 10"><path d="M.5 3.2L6.5 .3l6.2 5.5-6.6 3.9z" fill="#157a1e" stroke="#0a4a10" stroke-width=".9"/><path d="M3.5 3.5l3-1.5 3 2.5" fill="none" stroke="#2aa83a" stroke-width=".8"/></svg>
<div class="tl" style="left:47px;top:387.0px;color:#1a1a1a">26 Podkłady betonowe na podł.gruntowym</div>
<div class="a" style="left:22px;top:406px;width:8px;height:1px;border-top:1px dotted #e2e2e2"></div>
<svg class="a" style="left:30px;top:401.0px" width="13" height="10" viewBox="0 0 13 10"><path d="M.5 3.2L6.5 .3l6.2 5.5-6.6 3.9z" fill="#157a1e" stroke="#0a4a10" stroke-width=".9"/><path d="M3.5 3.5l3-1.5 3 2.5" fill="none" stroke="#2aa83a" stroke-width=".8"/></svg>
<div class="tl" style="left:47px;top:399.5px;color:#1a1a1a">27 Schody żelbetowe, proste  w salonie</div>
<div class="a" style="left:22px;top:418px;width:8px;height:1px;border-top:1px dotted #e2e2e2"></div>
<svg class="a" style="left:30px;top:413.5px" width="13" height="10" viewBox="0 0 13 10"><path d="M.5 3.2L6.5 .3l6.2 5.5-6.6 3.9z" fill="#157a1e" stroke="#0a4a10" stroke-width=".9"/><path d="M3.5 3.5l3-1.5 3 2.5" fill="none" stroke="#2aa83a" stroke-width=".8"/></svg>
<div class="tl" style="left:47px;top:412.0px;color:#1a1a1a">28 Schody żelbetowe, wspornikowe</div>
<div class="a" style="left:22px;top:431px;width:8px;height:1px;border-top:1px dotted #e2e2e2"></div>
<svg class="a" style="left:30px;top:426.0px" width="13" height="10" viewBox="0 0 13 10"><path d="M.5 3.2L6.5 .3l6.2 5.5-6.6 3.9z" fill="#157a1e" stroke="#0a4a10" stroke-width=".9"/><path d="M3.5 3.5l3-1.5 3 2.5" fill="none" stroke="#2aa83a" stroke-width=".8"/></svg>
<div class="tl" style="left:47px;top:424.5px;color:#1a1a1a">29 schody drewniane o szer.do 1 m z</div>
<div class="a" style="left:22px;top:443px;width:8px;height:1px;border-top:1px dotted #e2e2e2"></div>
<svg class="a" style="left:30px;top:438.5px" width="13" height="10" viewBox="0 0 13 10"><path d="M.5 3.2L6.5 .3l6.2 5.5-6.6 3.9z" fill="#157a1e" stroke="#0a4a10" stroke-width=".9"/><path d="M3.5 3.5l3-1.5 3 2.5" fill="none" stroke="#2aa83a" stroke-width=".8"/></svg>
<div class="tl" style="left:47px;top:437.0px;color:#1a1a1a">30 Ściany zewnętrzne z pust.ściennych</div>
<div class="a" style="left:22px;top:456px;width:8px;height:1px;border-top:1px dotted #e2e2e2"></div>
<svg class="a" style="left:30px;top:451.0px" width="13" height="10" viewBox="0 0 13 10"><path d="M.5 3.2L6.5 .3l6.2 5.5-6.6 3.9z" fill="#157a1e" stroke="#0a4a10" stroke-width=".9"/><path d="M3.5 3.5l3-1.5 3 2.5" fill="none" stroke="#2aa83a" stroke-width=".8"/></svg>
<div class="tl" style="left:47px;top:449.5px;color:#1a1a1a">31 Ściany z cegieł pełnych  na zaprawie</div>
<div class="a" style="left:22px;top:468px;width:8px;height:1px;border-top:1px dotted #e2e2e2"></div>
<svg class="a" style="left:30px;top:463.5px" width="13" height="10" viewBox="0 0 13 10"><path d="M.5 3.2L6.5 .3l6.2 5.5-6.6 3.9z" fill="#157a1e" stroke="#0a4a10" stroke-width=".9"/><path d="M3.5 3.5l3-1.5 3 2.5" fill="none" stroke="#2aa83a" stroke-width=".8"/></svg>
<div class="tl" style="left:47px;top:462.0px;color:#1a1a1a">32 Ścianki działowe pełne z cegieł</div>
<div class="a" style="left:22px;top:481px;width:8px;height:1px;border-top:1px dotted #e2e2e2"></div>
<svg class="a" style="left:30px;top:476.0px" width="13" height="10" viewBox="0 0 13 10"><path d="M.5 3.2L6.5 .3l6.2 5.5-6.6 3.9z" fill="#157a1e" stroke="#0a4a10" stroke-width=".9"/><path d="M3.5 3.5l3-1.5 3 2.5" fill="none" stroke="#2aa83a" stroke-width=".8"/></svg>
<div class="tl" style="left:47px;top:474.5px;color:#1a1a1a">33 Ścianki działowe z cegieł dziurawki</div>
</div>
<div class="a" style="left:200px;top:89px;width:12px;height:479px;background:#fbf9f4"></div>
<div class="a" style="left:200px;top:89px;width:12px;height:12px;background:#dde6fa;border-radius:2px"></div>
<div class="a" style="left:203px;top:93px;width:5px;height:5px;border-left:2px solid #4d6185;border-top:2px solid #4d6185;transform:rotate(45deg)"></div>
<div class="a" style="left:200px;top:101px;width:12px;height:119px;background:linear-gradient(90deg,#cfdcf8,#c4d4fa 50%,#b8caf4);border-radius:2px"></div>
<div class="a" style="left:200px;top:555px;width:12px;height:12px;background:#d4defa;border-radius:2px"></div>
<div class="a" style="left:203px;top:558px;width:5px;height:5px;border-right:2px solid #4d6185;border-bottom:2px solid #4d6185;transform:rotate(45deg)"></div>
<div class="a" style="left:19px;top:568px;width:181px;height:14px;background:#fbf9f4"></div>
<div class="a" style="left:200px;top:567px;width:13px;height:17px;background:#f0ede2"></div>
<div class="a" style="left:20px;top:568px;width:12px;height:13px;background:#d4defa;border-radius:2px"></div>
<div class="a" style="left:24px;top:572px;width:5px;height:5px;border-left:2px solid #4d6185;border-bottom:2px solid #4d6185;transform:rotate(45deg)"></div>
<div class="a" style="left:32px;top:568px;width:32px;height:13px;background:#c4d4fa;border-radius:2px"></div>
<div class="a" style="left:188px;top:568px;width:12px;height:13px;background:#d4defa;border-radius:2px"></div>
<div class="a" style="left:190px;top:572px;width:5px;height:5px;border-right:2px solid #4d6185;border-top:2px solid #4d6185;transform:rotate(45deg)"></div>
<div class="a" style="left:218px;top:74px;width:782px;height:1px;background:#222"></div>
<div class="a" style="left:218px;top:74px;width:2px;height:512px;background:#1a1a1a"></div>
<div class="a" style="left:220px;top:89px;width:778px;height:1px;background:#1a3a3a"></div>
<div class="gh" style="left:218px;width:73px">Lp.</div>
<div class="gh" style="left:291px;width:87px">Podstawa</div>
<div class="gh" style="left:378px;width:285px">Opis</div>
<div class="gh" style="left:663px;width:54px">jm</div>
<div class="gh" style="left:717px;width:64px">Nakłady</div>
<div class="gh" style="left:781px;width:77px">Koszt jedn.</div>
<div class="gh" style="left:858px;width:64px">R</div>
<div class="gh" style="left:922px;width:27px">M</div>
<div class="gh" style="left:949px;width:36px">S</div>
<div class="a" style="left:290px;top:75px;width:2px;height:13px;background:#2a2a2a"></div>
<div class="a" style="left:377px;top:75px;width:2px;height:13px;background:#2a2a2a"></div>
<div class="a" style="left:662px;top:75px;width:2px;height:13px;background:#2a2a2a"></div>
<div class="a" style="left:716px;top:75px;width:2px;height:13px;background:#2a2a2a"></div>
<div class="a" style="left:780px;top:75px;width:2px;height:13px;background:#2a2a2a"></div>
<div class="a" style="left:857px;top:75px;width:2px;height:13px;background:#2a2a2a"></div>
<div class="a" style="left:921px;top:75px;width:2px;height:13px;background:#2a2a2a"></div>
<div class="a" style="left:948px;top:75px;width:2px;height:13px;background:#2a2a2a"></div>
<div class="a" style="left:984px;top:75px;width:2px;height:13px;background:#2a2a2a"></div>
<div class="a" style="left:220px;top:90px;width:765px;height:4px;background:#18f4f4"></div>
<div class="a" style="left:220px;top:94px;width:765px;height:238px;background:#00ff00"></div>
<div class="a" style="left:220px;top:332px;width:765px;height:25px;background:#ffff00"></div>
<div class="a" style="left:220px;top:332px;width:765px;height:1px;background:repeating-linear-gradient(90deg,#303000 0 2px,#9a9a00 2px 2.5px,transparent 2.5px 4.5px)"></div>
<div class="a" style="left:220px;top:356px;width:765px;height:1px;background:repeating-linear-gradient(90deg,#303000 0 2px,#9a9a00 2px 2.5px,transparent 2.5px 4.5px)"></div>
<div class="a" style="left:220px;top:332px;width:1px;height:25px;background:repeating-linear-gradient(180deg,#303000 0 2px,transparent 2px 4.5px)"></div>
<div class="a" style="left:984px;top:332px;width:1px;height:25px;background:repeating-linear-gradient(180deg,#303000 0 2px,transparent 2px 4.5px)"></div>
<div class="a" style="left:220px;top:357px;width:765px;height:175px;background:#00ff00"></div>
<div class="a" style="left:220px;top:532px;width:765px;height:53px;background:#00ffff"></div>
<div class="a" style="left:220px;top:585px;width:778px;height:1px;background:#f4fcfc"></div>
<div class="vl" style="left:291px;top:90px;height:4px;background:#10a0a0"></div>
<div class="vl" style="left:291px;top:94px;height:238px;background:#18c018"></div>
<div class="vl" style="left:291px;top:333px;height:23px;background:#a89000"></div>
<div class="vl" style="left:291px;top:357px;height:175px;background:#18c018"></div>
<div class="vl" style="left:291px;top:532px;height:53px;background:#10a8a8"></div>
<div class="vl" style="left:378px;top:90px;height:4px;background:#10a0a0"></div>
<div class="vl" style="left:378px;top:94px;height:238px;background:#18c018"></div>
<div class="vl" style="left:378px;top:333px;height:23px;background:#a89000"></div>
<div class="vl" style="left:378px;top:357px;height:175px;background:#18c018"></div>
<div class="vl" style="left:378px;top:532px;height:53px;background:#10a8a8"></div>
<div class="vl" style="left:663px;top:90px;height:4px;background:#10a0a0"></div>
<div class="vl" style="left:663px;top:94px;height:238px;background:#18c018"></div>
<div class="vl" style="left:663px;top:333px;height:23px;background:#a89000"></div>
<div class="vl" style="left:663px;top:357px;height:175px;background:#18c018"></div>
<div class="vl" style="left:663px;top:532px;height:53px;background:#10a8a8"></div>
<div class="vl" style="left:717px;top:90px;height:4px;background:#10a0a0"></div>
<div class="vl" style="left:717px;top:94px;height:238px;background:#18c018"></div>
<div class="vl" style="left:717px;top:333px;height:23px;background:#a89000"></div>
<div class="vl" style="left:717px;top:357px;height:175px;background:#18c018"></div>
<div class="vl" style="left:717px;top:532px;height:53px;background:#10a8a8"></div>
<div class="vl" style="left:781px;top:90px;height:4px;background:#10a0a0"></div>
<div class="vl" style="left:781px;top:94px;height:238px;background:#18c018"></div>
<div class="vl" style="left:781px;top:333px;height:23px;background:#a89000"></div>
<div class="vl" style="left:781px;top:357px;height:175px;background:#18c018"></div>
<div class="vl" style="left:781px;top:532px;height:53px;background:#10a8a8"></div>
<div class="vl" style="left:858px;top:90px;height:4px;background:#10a0a0"></div>
<div class="vl" style="left:858px;top:94px;height:238px;background:#18c018"></div>
<div class="vl" style="left:858px;top:333px;height:23px;background:#a89000"></div>
<div class="vl" style="left:858px;top:357px;height:175px;background:#18c018"></div>
<div class="vl" style="left:858px;top:532px;height:53px;background:#10a8a8"></div>
<div class="vl" style="left:922px;top:90px;height:4px;background:#10a0a0"></div>
<div class="vl" style="left:922px;top:94px;height:238px;background:#18c018"></div>
<div class="vl" style="left:922px;top:333px;height:23px;background:#a89000"></div>
<div class="vl" style="left:922px;top:357px;height:175px;background:#18c018"></div>
<div class="vl" style="left:922px;top:532px;height:53px;background:#10a8a8"></div>
<div class="vl" style="left:949px;top:90px;height:4px;background:#10a0a0"></div>
<div class="vl" style="left:949px;top:94px;height:238px;background:#18c018"></div>
<div class="vl" style="left:949px;top:333px;height:23px;background:#a89000"></div>
<div class="vl" style="left:949px;top:357px;height:175px;background:#18c018"></div>
<div class="vl" style="left:949px;top:532px;height:53px;background:#10a8a8"></div>
<div class="a" style="left:220px;top:481px;width:765px;height:1px;background:#18c018"></div>
<div class="a" style="left:985px;top:89px;width:15px;height:497px;background:linear-gradient(90deg,#f6f4ee,#f2f0e8 60%,#ebe8dc)"></div>
<div class="a" style="left:985px;top:89px;width:13px;height:5px;background:#fff;border:1px solid #777"></div>
<div class="a" style="left:985px;top:95px;width:13px;height:13px;background:#ece9d8;border-right:1px solid #555;border-bottom:1px solid #555;border-top:1px solid #fff;border-left:1px solid #fff"></div>
<div class="a" style="left:988px;top:100px;width:0;height:0;border-left:3.5px solid transparent;border-right:3.5px solid transparent;border-bottom:4px solid #000"></div>
<div class="a" style="left:985px;top:109px;width:13px;height:25px;background:#f2efe6;border-right:1px solid #666;border-bottom:1px solid #666;border-top:1px solid #fff;border-left:1px solid #fff"></div>
<div class="a" style="left:985px;top:571px;width:13px;height:14px;background:#ece9d8;border-right:1px solid #555;border-bottom:1px solid #555;border-top:1px solid #fff;border-left:1px solid #fff"></div>
<div class="a" style="left:988px;top:577px;width:0;height:0;border-left:3.5px solid transparent;border-right:3.5px solid transparent;border-top:4px solid #000"></div>
<div class="gt" style="right:713px;top:95.8px;">3</div>
<div class="gt" style="right:713px;top:108.3px;">d.1.1</div>
<div class="gt" style="left:295px;top:95.8px;">KNR 2-02 0603-</div>
<div class="gt" style="left:295px;top:108.3px;">01</div>
<div class="gt" style="left:382px;top:95.8px;">Izolacje przeciwwilgoc.powłokowe bitumiczne pionowe funda-</div>
<div class="gt" style="left:382px;top:108.3px;">mentów- wyk.na zimno z emulsji asfalt.- pierwsza warstwa</div>
<div class="gt" style="left:382px;top:120.8px;">obmiar  =</div>
<div class="gt" style="left:382px;top:133.2px;letter-spacing:.12px">(2.6+0.5+3.55+1.0+3.3+5.0-1.0+3.4+9.7+9.2+9.4+4.0+0.6+</div>
<div class="gt" style="left:382px;top:145.7px;">8.3)*0.4*2</div>
<div class="gt" style="right:341px;top:145.7px;">47.64</div>
<div class="gt" style="left:382px;top:158.2px;">(6.3+6.4+1.0+1.0)*0.4*2</div>
<div class="gt" style="right:341px;top:158.2px;">11.76</div>
<div class="gt" style="left:382px;top:170.7px;">(7.9-1.0+0.6+4.0+0.6)*0.4*2</div>
<div class="gt" style="right:341px;top:170.7px;">9.68</div>
<div class="gt" style="left:382px;top:183.2px;">(6.3+6.4+1.0+1.0)*0.4*2</div>
<div class="gt" style="right:341px;top:183.2px;">11.76</div>
<div class="gt" style="left:382px;top:195.6px;">(2.4+2.34)*0.4*2</div>
<div class="gt" style="right:341px;top:195.6px;">3.79</div>
<div class="gt" style="left:382px;top:208.1px;">1.0*2*0.4*2</div>
<div class="gt" style="right:341px;top:208.1px;">1.60</div>
<div class="gt" style="left:382px;top:220.6px;">17.5*0.4</div>
<div class="gt" style="right:341px;top:220.6px;">7.00</div>
<div class="gt" style="left:382px;top:233.1px;">A  (suma częściowa)</div>
<div class="gt" style="right:341px;top:233.1px;">----------</div>
<div class="gt" style="right:341px;top:245.6px;">93.23</div>
<div class="gt" style="left:382px;top:258.0px;">93.23</div>
<div class="gt" style="right:341px;top:258.0px;">93.23</div>
<div class="gt" style="left:382px;top:270.5px;">Ściany fundamentów:</div>
<div class="gt" style="left:382px;top:283.0px;">(222.86+8.40)*2</div>
<div class="gt" style="right:341px;top:283.0px;">462.52</div>
<div class="gt" style="left:382px;top:295.5px;">RAZEM</div>
<div class="gt" style="right:341px;top:295.5px;">648.98 m²</div>
<div class="gt" style="left:382px;top:320.4px;">-- R --</div>
<div class="gt" style="left:650px;width:80px;text-align:center;top:95.8px;">m²</div>
<div class="gt gy" style="right:713px;top:332.9px;">1*</div>
<div class="gt gy" style="left:382px;top:332.9px;">robocizna</div>
<div class="gt gy" style="left:382px;top:345.4px;">0.0966r-g/m² * 8.00zł/r-g</div>
<div class="gt gy" style="left:650px;width:80px;text-align:center;top:332.9px;">r-g</div>
<div class="gt gy" style="right:222px;top:332.9px;">62.69</div>
<div class="gt gy" style="right:148px;top:332.9px;">0.7728</div>
<div class="gt gy" style="right:82px;top:332.9px;">501.53</div>
<div class="gt" style="left:382px;top:370.4px;">-- M --</div>
<div class="gt" style="right:713px;top:382.8px;">2*</div>
<div class="gt" style="left:382px;top:382.8px;">emulsja asfaltowa izolacyjna</div>
<div class="gt" style="left:382px;top:395.3px;">0.35kg/m² * 1.33zł/kg</div>
<div class="gt" style="left:650px;width:80px;text-align:center;top:382.8px;">kg</div>
<div class="gt" style="right:222px;top:382.8px;">227.14</div>
<div class="gt" style="right:148px;top:382.8px;">0.4655</div>
<div class="gt" style="left:925px;top:382.8px;">302.</div>
<div class="gt" style="left:925px;top:395.3px;">10</div>
<div class="gt" style="right:713px;top:407.8px;">3*</div>
<div class="gt" style="left:382px;top:407.8px;">materiały pomocnicze</div>
<div class="gt" style="left:382px;top:420.3px;">1.5%(od M)</div>
<div class="gt" style="left:650px;width:80px;text-align:center;top:407.8px;">%</div>
<div class="gt" style="right:222px;top:407.8px;">1.50</div>
<div class="gt" style="right:148px;top:407.8px;">0.0070</div>
<div class="gt" style="left:925px;top:407.8px;">4.54</div>
<div class="gt" style="left:382px;top:445.2px;">-- S --</div>
<div class="gt" style="right:713px;top:457.7px;">4*</div>
<div class="gt" style="left:382px;top:457.7px;">środek transportowy</div>
<div class="gt" style="left:382px;top:470.2px;">0.0005m-g/m² * 47.42zł/m-g</div>
<div class="gt" style="left:650px;width:80px;text-align:center;top:457.7px;">m-g</div>
<div class="gt" style="right:222px;top:457.7px;">0.32</div>
<div class="gt" style="right:148px;top:457.7px;">0.0237</div>
<div class="gt" style="right:19px;top:457.7px;">15.38</div>
<div class="gt" style="left:382px;top:482.7px;">Razem koszty bezpośrednie:</div>
<div class="gt" style="right:341px;top:482.7px;">823.55</div>
<div class="gt" style="right:148px;top:482.7px;">1.2690</div>
<div class="gt" style="right:82px;top:482.7px;">501.53</div>
<div class="gt" style="left:925px;top:482.7px;">306</div>
<div class="gt" style="left:925px;top:495.2px;">64</div>
<div class="gt" style="right:19px;top:482.7px;">15.38</div>
<div class="gt" style="left:382px;top:507.6px;">Jednostkowe koszty bezpośrednie:</div>
<div class="gt" style="right:341px;top:507.6px;">1.2690</div>
<div class="gt" style="right:82px;top:507.6px;">0.7728</div>
<div class="gt" style="left:925px;top:507.6px;">0.47</div>
<div class="gt" style="left:925px;top:520.1px;">25</div>
<div class="gt" style="left:956px;top:507.6px;">0.023</div>
<div class="gt" style="left:961px;top:520.1px;">7</div>
<div class="gt gc" style="right:713px;top:533.5px;">4</div>
<div class="gt gc" style="right:713px;top:545.6px;">d.1.1</div>
<div class="gt gc" style="left:295px;top:533.5px;">KNR 2-02 0603-</div>
<div class="gt gc" style="left:295px;top:545.6px;">02</div>
<div class="gt gc" style="left:382px;top:533.5px;">Izolacje przeciwwilgoc.powłokowe bitumiczne pionowe funda-</div>
<div class="gt gc" style="left:382px;top:545.6px;">mentów - wyk.na zimno z emulsji asfalt.- druga i nast.warst-</div>
<div class="gt gc" style="left:382px;top:557.8px;">wa</div>
<div class="gt gc" style="left:382px;top:569.8px;">obmiar  = 648.98 m²</div>
<div class="gt gc" style="left:650px;width:80px;text-align:center;top:533.5px;">m²</div>
<div class="a" style="left:8px;top:507px;width:85px;height:85px;border-radius:50%;border:2px solid rgba(255,255,255,.55);box-shadow:0 0 0 1px rgba(160,160,160,.18),inset 0 0 0 1px rgba(160,160,160,.18)"></div>
<div class="a" style="left:20px;top:538px;width:15px;height:24px;border-radius:50%;border:2px solid rgba(255,255,255,.5);box-shadow:0 0 0 1px rgba(160,160,160,.15)"></div>
<div class="a" style="left:0;top:586px;width:1000px;height:1px;background:#fff"></div>
<div id="status">
<span style="left:19px">NORMA Standard</span>
<div class="a" style="left:783px;top:588px;width:50px;height:13px;border-top:1px solid #c0bcac;border-left:1px solid #c0bcac;border-right:1px solid #fff;background:#e6e2d2"></div>
<span style="left:785px">3 z 134</span>
<div class="a" style="left:835px;top:588px;width:72px;height:13px;border-top:1px solid #c0bcac;border-left:1px solid #c0bcac;border-right:1px solid #fff;background:#e6e2d2"></div>
<span style="left:837px">1525040.00zł</span>
<div class="a" style="left:909px;top:588px;width:91px;height:13px;border-top:1px solid #c0bcac;border-left:1px solid #c0bcac;border-right:1px solid #fff;background:#e6e2d2"></div>
<span style="left:911px">Bez bazy</span>
</div>
</body></html>
